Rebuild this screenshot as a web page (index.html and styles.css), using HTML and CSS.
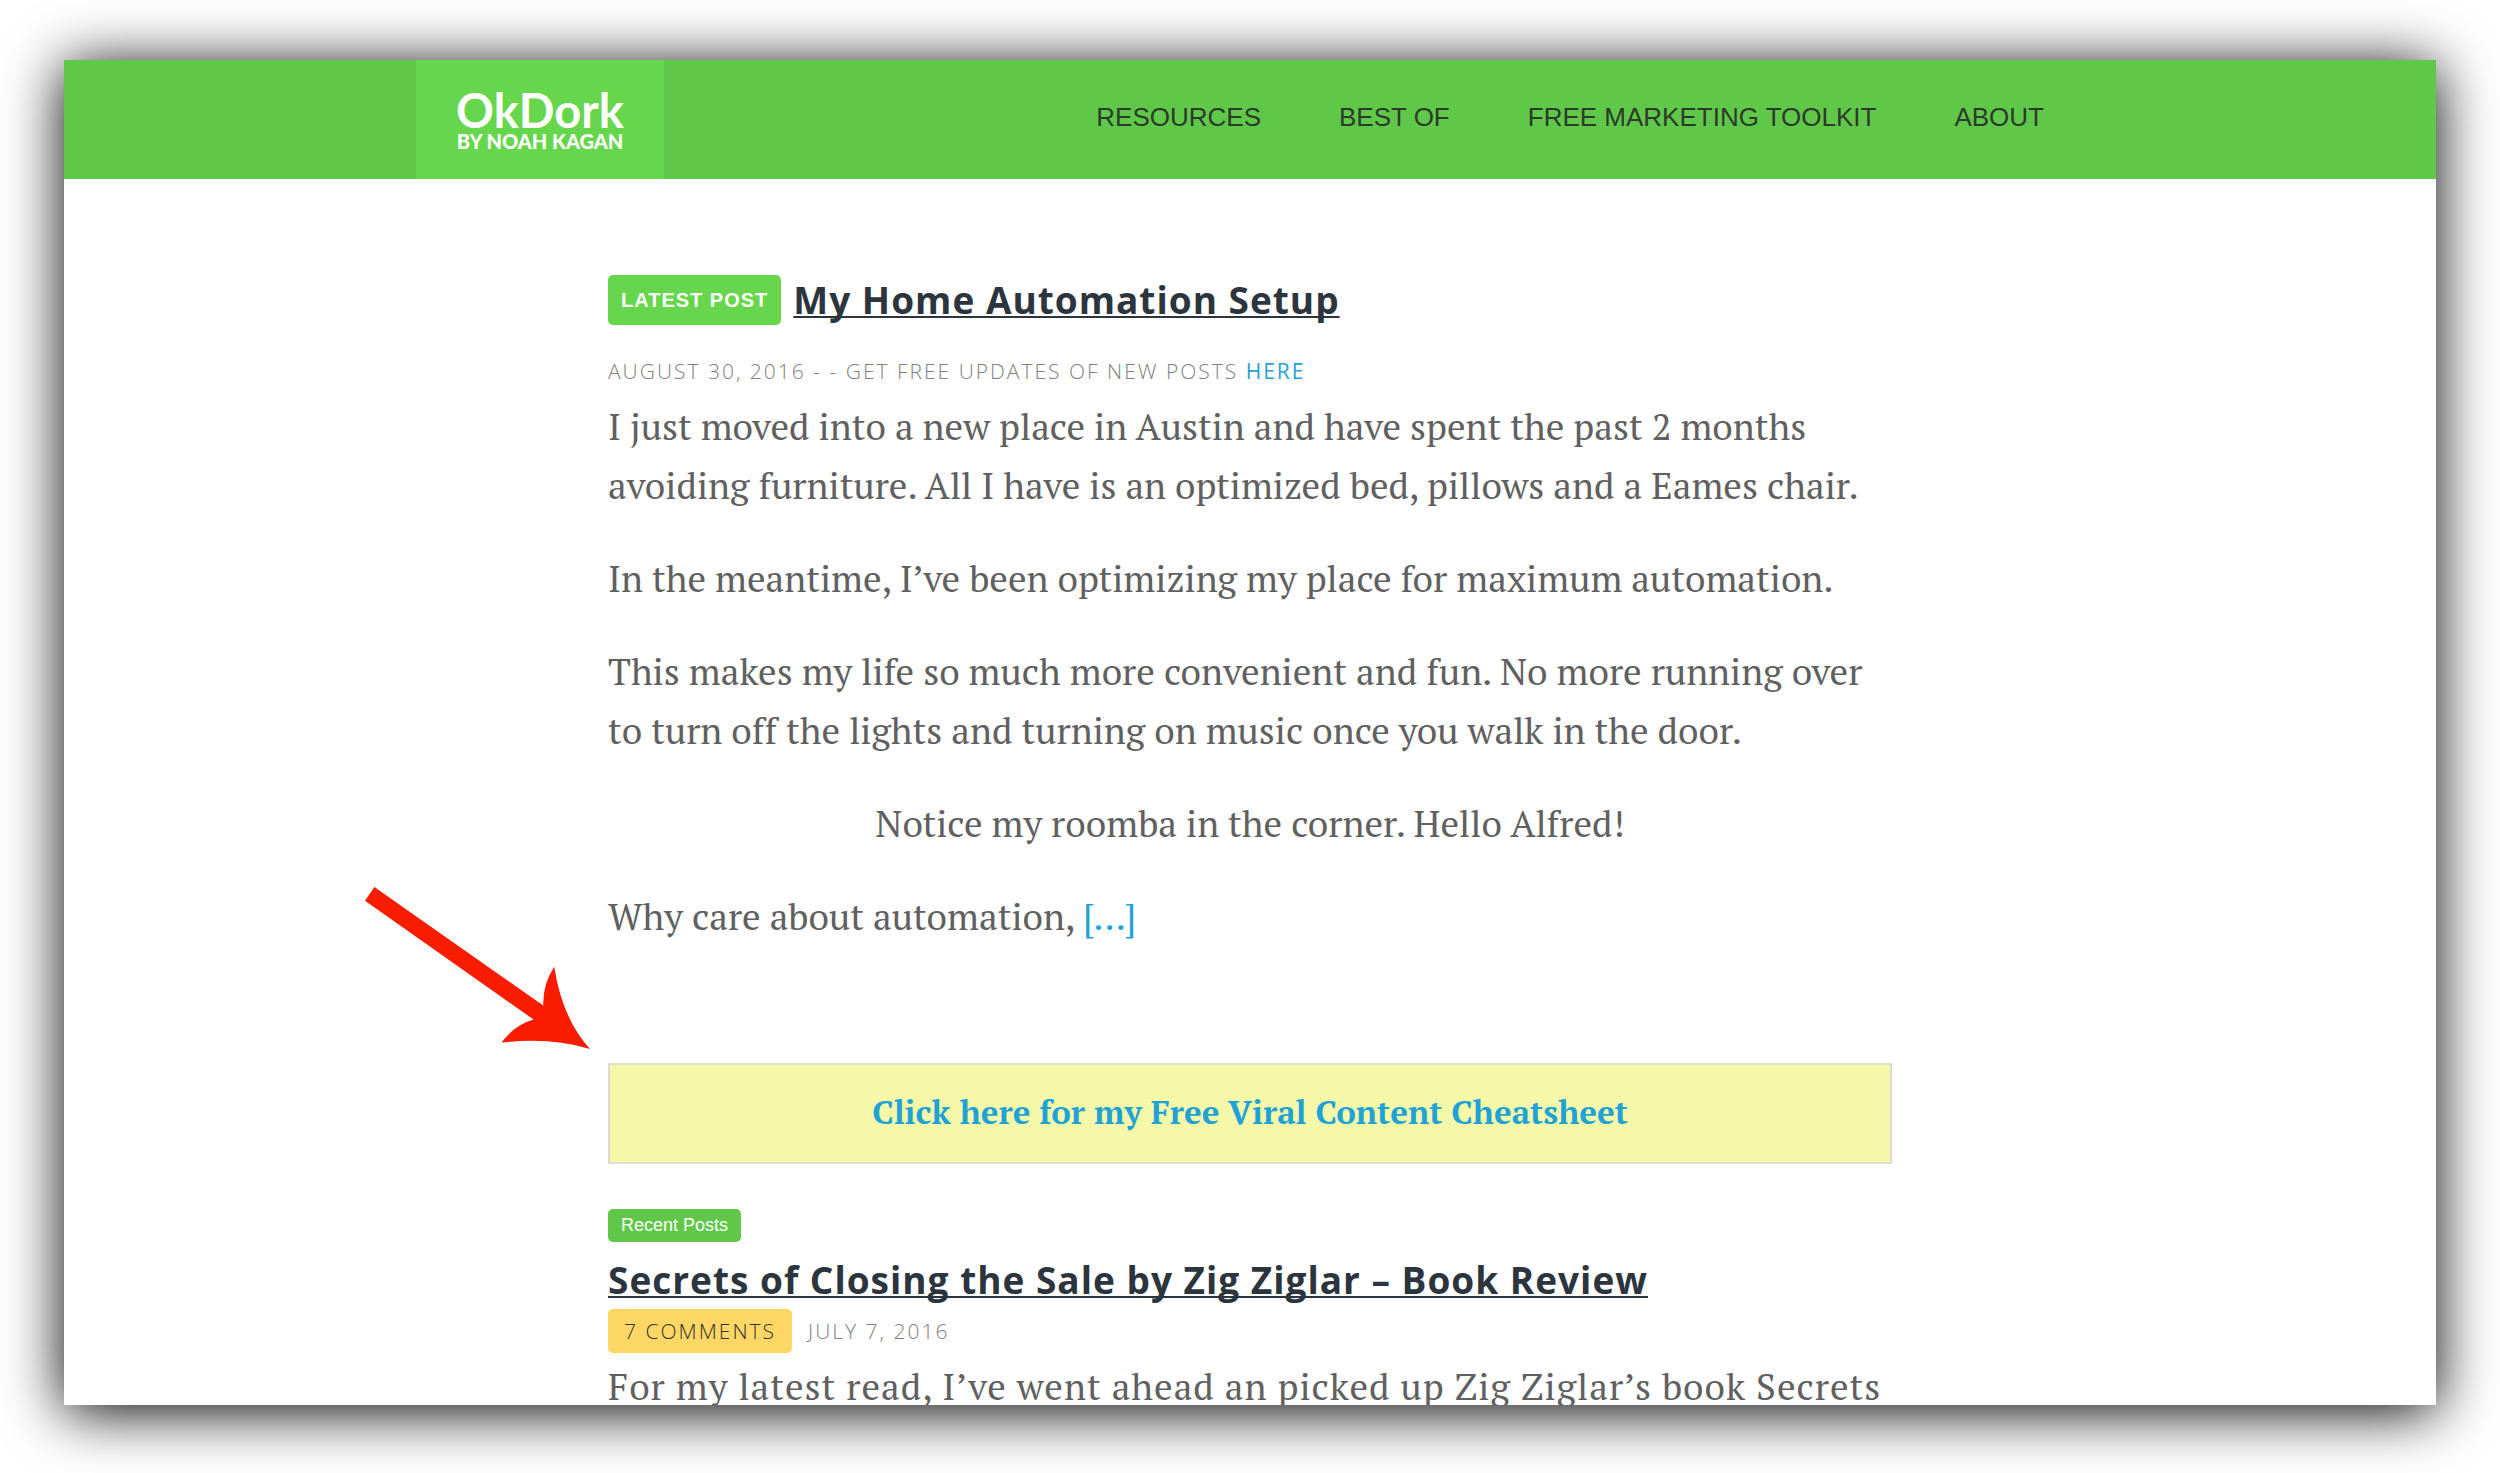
FILE: index.html
```html
<!DOCTYPE html>
<html lang="en">
<head>
<meta charset="UTF-8" />
<meta name="viewport" content="width=device-width, initial-scale=1" />
<title>OkDork - by Noah Kagan</title>
<link rel="stylesheet" href="styles.css">
</head>
<body>

<div class="window">
  <header class="site-header">
    <div class="header-inner">
      <a class="logo" href="#">
        <span class="logo-name">OkDork</span>
        <span class="logo-by">BY NOAH KAGAN</span>
      </a>
      <nav class="main-nav">
        <a href="#">RESOURCES</a>
        <a href="#">BEST OF</a>
        <a href="#">FREE MARKETING TOOLKIT</a>
        <a href="#">ABOUT</a>
      </nav>
    </div>
  </header>

  <main class="content">
    <article class="post">
      <div class="post-head">
        <span class="badge badge-latest">LATEST POST</span>
        <h2 class="post-title"><a href="#">My Home Automation Setup</a></h2>
      </div>
      <p class="meta">AUGUST 30, 2016 - - GET FREE UPDATES OF NEW POSTS <a href="#">HERE</a></p>
      <div class="post-body">
        <p>I just moved into a new place in Austin and have spent the past 2 months<br>avoiding furniture. All I have is an optimized bed, pillows and a Eames chair.</p>
        <p>In the meantime, I’ve been optimizing my place for maximum automation.</p>
        <p>This makes my life so much more convenient and fun. No more running over<br>to turn off the lights and turning on music once you walk in the door.</p>
        <p class="centered">Notice my roomba in the corner. Hello Alfred!</p>
        <p>Why care about automation, <a href="#">[…]</a></p>
      </div>
    </article>

    <div class="cta">
      <a href="#">Click here for my Free Viral Content Cheatsheet</a>
      <svg class="cta-arrow" viewBox="72 77 674 485" aria-hidden="true">
        <path d="M72 118 L100 77 L606 432 Q604 368 639 316 Q662 470 746 562 Q626 526 481 543 Q520 490 577 474 Z" />
      </svg>
    </div>

    <article class="post recent">
      <span class="badge badge-recent">Recent Posts</span>
      <h2 class="post-title"><a href="#">Secrets of Closing the Sale by Zig Ziglar – Book Review</a></h2>
      <div class="meta meta-row">
        <a class="comments" href="#">7 COMMENTS</a>
        <span>JULY 7, 2016</span>
      </div>
      <p class="excerpt">For my latest read, I’ve went ahead an picked up Zig Ziglar’s book Secrets</p>
    </article>
  </main>
</div>

</body>
</html>
```
FILE: styles.css
```css
* {
  box-sizing: border-box;
}

body {
  margin: 0;
  padding: 60px 64px 68px;
  background: #fff;
  color: #606060;
  font-family: "PT Serif", "Liberation Serif", serif;
}

a {
  color: #1fa2d6;
  text-decoration: none;
}

/* Browser window with the big drop shadow */
.window {
  height: calc(100vh - 128px);
  overflow: hidden;
  background: #fff;
  box-shadow: 0 6px 56px #000;
}

/* Header */
.site-header {
  background: #60c848;
}

.header-inner {
  display: flex;
  justify-content: space-between;
  max-width: 1668px;
  height: 119px;
  margin: 0 auto;
}

.logo {
  display: flex;
  flex-direction: column;
  align-items: center;
  justify-content: center;
  width: 248px;
  background: #66d64c;
  color: #fff;
  font-family: Lato, sans-serif;
}

.logo-name {
  font-size: 47px;
  font-weight: 700;
  line-height: 42px;
}

.logo-by {
  font-size: 20px;
  font-weight: 900;
  line-height: 20px;
}

.main-nav {
  display: flex;
  align-items: center;
  gap: 78px;
  padding: 0 40px 4px 0;
}

.main-nav a {
  color: #2d3a2b;
  font-family: "Liberation Sans", Arial, sans-serif;
  font-size: 26px;
}

/* Content column */
.content {
  max-width: 1284px;
  margin: 0 auto;
  padding-top: 96px;
}

.post-head {
  display: flex;
  align-items: center;
  gap: 12px;
}

.badge {
  display: inline-block;
  padding: 0 13px;
  border-radius: 5px;
  color: #fff;
  font-family: "Liberation Sans", Arial, sans-serif;
}

.badge-latest {
  background: #66d64c;
  font-size: 20px;
  font-weight: 700;
  letter-spacing: 1px;
  line-height: 50px;
}

.badge-recent {
  background: #60c848;
  font-size: 18px;
  line-height: 33px;
}

.post-title {
  margin: 0;
  font-family: "Open Sans", sans-serif;
  font-size: 37px;
  font-weight: 700;
  letter-spacing: 1px;
  line-height: 50px;
}

.post-title a {
  color: #2c343e;
  text-decoration: underline;
  text-decoration-thickness: 2px;
  text-decoration-skip-ink: none;
  text-underline-offset: 2px;
}

.meta {
  margin: 0 0 4px;
  color: #808080;
  font-family: "Open Sans", sans-serif;
  font-size: 21px;
  font-weight: 300;
  letter-spacing: 2px;
  line-height: 44px;
}

.post-head + .meta {
  margin-top: 24px;
}

.meta a {
  font-weight: 400;
}

.post-body p {
  margin: 0 0 34px;
  font-size: 37px;
  line-height: 59px;
}

.post-body .centered {
  text-align: center;
}

/* Yellow offer box */
.cta {
  position: relative;
  margin: 117px 0 45px;
  padding: 18px 20px 22px;
  border: 2px solid #dcdcd0;
  background: #f4f8a8;
  text-align: center;
}

.cta > a {
  display: block;
  font-size: 33px;
  font-weight: 700;
  line-height: 57px;
}

.cta-arrow {
  position: absolute;
  right: calc(100% + 20px);
  bottom: calc(100% + 16px);
  width: 225px;
  height: 162px;
  fill: #f81c00;
}

/* Recent posts */
.recent .badge {
  display: block;
  width: fit-content;
  margin-bottom: 13px;
}

.meta-row {
  display: flex;
  gap: 16px;
  margin-top: 4px;
}

.meta .comments {
  padding: 0 16px;
  border-radius: 5px;
  background: #ffd764;
  color: #333;
  font-weight: 300;
}

.excerpt {
  margin: 0;
  font-size: 37px;
  letter-spacing: 1px;
  line-height: 59px;
  white-space: nowrap;
}
```
